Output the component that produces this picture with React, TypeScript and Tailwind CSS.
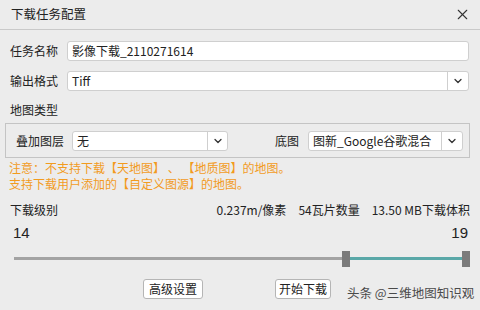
import React from "react";
import { ChevronDown, X } from "lucide-react";

const font = { fontFamily: '"Noto Sans CJK SC", "Microsoft YaHei", sans-serif' };

function Select({ value, w, sep }: { value: string; w: string; sep: string }) {
  return (
    <div className={`flex h-[20px] ${w} items-stretch rounded-[3px] border border-[#cfcfcf] bg-white`}>
      <div className="flex flex-1 items-center pl-[4px] text-[12px] text-[#222] leading-none">{value}</div>
      <div className={`flex ${sep} items-center justify-center border-l border-[#cfcfcf]`}>
        <ChevronDown size={12} strokeWidth={2.6} color="#333" />
      </div>
    </div>
  );
}

export default function App() {
  return (
    <div className="h-[310px] w-[480px] overflow-hidden bg-[#ececec] text-[#222]" style={font}>
      {/* title bar */}
      <div className="flex h-[30px] items-center justify-between border-b border-[#c9c9c9] pl-[11px] pr-[9px]">
        <span className="text-[12.5px] leading-none">下载任务配置</span>
        <X size={17} strokeWidth={1.5} color="#333" />
      </div>

      <div className="px-[10px]">
        {/* row 1 */}
        <div className="mt-[11px] flex items-center">
          <span className="w-[57px] text-[12px] leading-none">任务名称</span>
          <div className="flex h-[20px] w-[402px] items-center rounded-[3px] border border-[#cfcfcf] bg-white pl-[4px] text-[12px] leading-none">
            影像下载_2110271614
          </div>
        </div>
        {/* row 2 */}
        <div className="mt-[10px] flex items-center">
          <span className="w-[57px] text-[12px] leading-none">输出格式</span>
          <Select value="Tiff" w="w-[402px]" sep="w-[21px]" />
        </div>
        {/* map type */}
        <div className="mt-[13px] text-[12px] leading-none">地图类型</div>
      </div>

      <div className="mx-[5px] mt-[7px] flex h-[35px] w-[465px] items-center border border-[#c4c4c4] pl-[10px]">
        <span className="w-[56px] text-[12px] leading-none">叠加图层</span>
        <Select value="无" w="w-[156px]" sep="w-[20px]" />
        <span className="ml-[47px] w-[33px] text-[12px] leading-none">底图</span>
        <Select value="图新_Google谷歌混合" w="w-[155px]" sep="w-[21px]" />
      </div>

      <div className="mt-[2px] px-[9px] text-[12px] leading-[16px] text-[#f29b1e]">
        <div>注意：不支持下载【天地图】 、 【地质图】的地图。</div>
        <div>支持下载用户添加的【自定义图源】的地图。</div>
      </div>

      <div className="mt-[12px] flex items-center justify-between pl-[10px] pr-[10px] text-[12px] leading-none">
        <span>下载级别</span>
        <div className="flex gap-[12px]">
          <span>0.237m/像素</span>
          <span>54瓦片数量</span>
          <span>13.50 MB下载体积</span>
        </div>
      </div>

      <div className="mt-[9px] flex items-center justify-between pl-[13px] pr-[12px] text-[15px] leading-none" style={{ fontFamily: '"Liberation Sans", Arial, sans-serif' }}>
        <span>14</span>
        <span>19</span>
      </div>

      {/* slider */}
      <div className="relative mx-[14px] mt-[11px] h-[16px] w-[454px]">
        <div className="absolute left-0 top-[6px] h-[3px] w-[330px] bg-[#a3a3a3]" />
        <div className="absolute left-[332px] top-[6px] h-[3px] w-[120px] bg-[#5aa8a8]" />
        <div className="absolute left-[328px] top-0 h-[16px] w-[8px] bg-[#7b7b7b]" />
        <div className="absolute left-[448px] top-0 h-[16px] w-[8px] bg-[#7b7b7b]" />
      </div>

      <div className="mt-[12px] flex items-start pl-[143px]">
        <button className="flex h-[20px] w-[60px] items-center justify-center rounded-[3px] border border-[#b5b5b5] bg-white text-[12px] leading-none">
          高级设置
        </button>
        <button className="ml-[72px] flex h-[20px] w-[56px] items-center justify-center rounded-[3px] border border-[#b5b5b5] bg-white text-[12px] leading-none">
          开始下载
        </button>
        <span className="ml-[16px] mt-[8px] text-[12.5px] leading-none text-[#4a4a4a]">头条 @三维地图知识观</span>
      </div>
    </div>
  );
}
